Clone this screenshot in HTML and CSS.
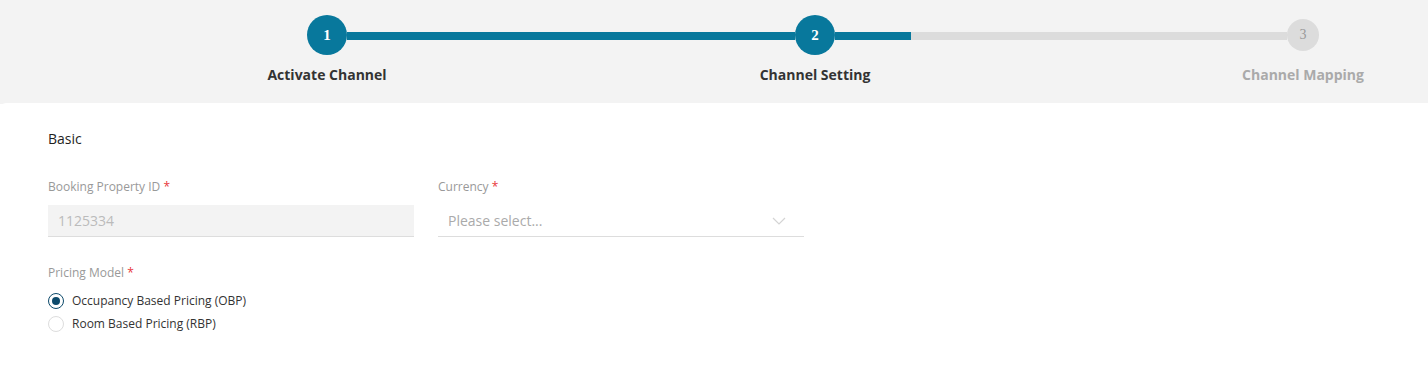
FILE: index.html
```html
<!DOCTYPE html>
<html lang="en">
<head>
    <meta charset="UTF-8">
    <meta name="viewport" content="width=device-width, initial-scale=1.0">
    <title>Channel Setting</title>
    <link rel="stylesheet" href="styles.css">
</head>
<body>
    <header class="wizard">
        <div class="stepper">
            <div class="step done">
                <span class="step-num">1</span>
                <span class="step-label">Activate Channel</span>
            </div>
            <div class="track">
                <div class="track-fill" style="width: 100%"></div>
            </div>
            <div class="step done">
                <span class="step-num">2</span>
                <span class="step-label">Channel Setting</span>
            </div>
            <div class="track track-last">
                <div class="track-fill" style="width: 76px"></div>
            </div>
            <div class="step todo">
                <span class="step-num">3</span>
                <span class="step-label">Channel Mapping</span>
            </div>
        </div>
    </header>

    <main class="card">
        <h3 class="section-title">Basic</h3>

        <div class="form-row">
            <div class="field">
                <label class="field-label">Booking Property ID <span class="req">*</span></label>
                <div class="input disabled">1125334</div>
            </div>
            <div class="field">
                <label class="field-label">Currency <span class="req">*</span></label>
                <div class="input select">
                    <span class="placeholder">Please select...</span>
                    <svg class="chevron" width="14" height="8" viewBox="0 0 14 8">
                        <path d="M1 1 L7 7 L13 1" fill="none" stroke="#d4d4d4" stroke-width="1.2"/>
                    </svg>
                </div>
            </div>
        </div>

        <div class="field">
            <label class="field-label">Pricing Model <span class="req">*</span></label>
            <div class="radio-group">
                <label class="radio checked"><span class="radio-dot"></span>Occupancy Based Pricing (OBP)</label>
                <label class="radio"><span class="radio-dot"></span>Room Based Pricing (RBP)</label>
            </div>
        </div>
    </main>
</body>
</html>
```

FILE: styles.css
```css
html, body {
    margin: 0;
    background: #ffffff;
    font-family: "Open Sans", "Liberation Sans", sans-serif;
    overflow: hidden;
}
.wizard {
    background: #f3f3f3;
    height: 104px;
}
.stepper {
    display: flex;
    align-items: flex-start;
    padding: 15px 0 0 307px;
}
.step {
    display: flex;
    flex-direction: column;
    align-items: center;
    width: 40px;
}
.step-num {
    width: 40px;
    height: 40px;
    border-radius: 50%;
    background: #08789c;
    color: #ffffff;
    display: flex;
    align-items: center;
    justify-content: center;
    font-family: "Liberation Serif", serif;
    font-weight: bold;
    font-size: 15px;
}
.step-label {
    margin-top: 10px;
    white-space: nowrap;
    font-size: 14px;
    font-weight: bold;
    color: #333333;
}
.step.todo {
    width: 32px;
}
.step.todo .step-num {
    width: 32px;
    height: 32px;
    margin: 4px 0;
    background: #dcdcdc;
    color: #999999;
    font-weight: normal;
    font-size: 14px;
}
.step.todo .step-label {
    color: #aaaaaa;
}
.track {
    width: 448px;
    height: 8px;
    margin-top: 17px;
    background: #dcdcdc;
}
.track-last {
    width: 452px;
}
.track-fill {
    height: 100%;
    background: #08789c;
}
.card {
    background: #ffffff;
    border-top-left-radius: 6px;
    margin-top: -1px;
    padding: 26px 48px;
}
.section-title {
    margin: 0 0 29px;
    font-size: 14px;
    font-weight: normal;
    line-height: 20px;
    color: #1f1f1f;
}
.form-row {
    display: flex;
    gap: 24px;
    margin-bottom: 27px;
}
.form-row .field {
    width: 366px;
}
.field-label {
    display: block;
    font-size: 12px;
    line-height: 17px;
    color: #999999;
    margin-bottom: 10px;
}
.req {
    color: #e8363b;
}
.input {
    height: 31px;
    border-bottom: 1px solid #dddddd;
    padding: 0 10px;
    display: flex;
    align-items: center;
    justify-content: space-between;
    font-size: 14px;
}
.input.disabled {
    background: #f3f3f3;
    color: #bbbbbb;
}
.placeholder {
    color: #aaaaaa;
}
.chevron {
    margin-right: 8px;
}
.radio-group {
    display: flex;
    flex-direction: column;
    gap: 3px;
    margin-top: 2px;
}
.radio {
    display: flex;
    align-items: center;
    gap: 8px;
    font-size: 12px;
    line-height: 20px;
    color: #333333;
}
.radio-dot {
    width: 14px;
    height: 14px;
    border: 1px solid #dddddd;
    border-radius: 50%;
    display: flex;
    align-items: center;
    justify-content: center;
}
.radio.checked .radio-dot {
    border-color: #0d4a6b;
}
.radio.checked .radio-dot::after {
    content: "";
    width: 8px;
    height: 8px;
    border-radius: 50%;
    background: #0d4a6b;
}
```
